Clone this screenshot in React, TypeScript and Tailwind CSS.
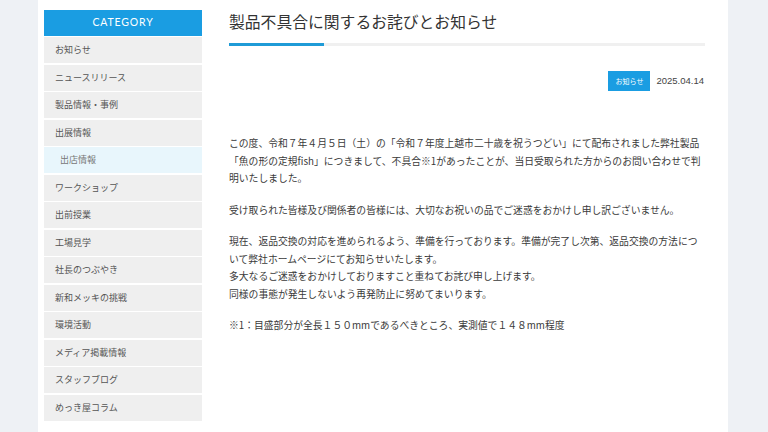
const categories = [
  { label: "お知らせ" },
  { label: "ニュースリリース" },
  { label: "製品情報・事例" },
  { label: "出展情報" },
  { label: "出店情報", sub: true },
  { label: "ワークショップ" },
  { label: "出前授業" },
  { label: "工場見学" },
  { label: "社長のつぶやき" },
  { label: "新和メッキの挑戦" },
  { label: "環境活動" },
  { label: "メディア掲載情報" },
  { label: "スタッフブログ" },
  { label: "めっき屋コラム" },
];

const jp = "font-['Noto_Sans_CJK_JP','Noto_Sans',sans-serif]";

export default function App() {
  return (
    <div className={`w-[768px] h-[432px] overflow-hidden bg-[#eef1f5] ${jp}`}>
      <div className="ml-[38px] w-[690px] h-full bg-white flex pt-[10px]">
        {/* Sidebar */}
        <aside className="ml-[6px] w-[158px] shrink-0">
          <div className="h-[26px] bg-[#1a9de2] flex items-center justify-center text-white text-[10.5px] font-['Lato',sans-serif] tracking-[0.08em]">
            CATEGORY
          </div>
          <ul className="flex flex-col gap-[1.5px] pt-[1px]">
            {categories.map((c) => (
              <li
                key={c.label}
                className={`h-[26px] flex items-center text-[9px] ${
                  c.sub ? "bg-[#e8f6fc] pl-[16px] text-[#777]" : "bg-[#efefef] pl-[11px] text-[#555]"
                }`}
              >
                {c.label}
              </li>
            ))}
          </ul>
        </aside>

        {/* Main */}
        <main className="ml-[27px] w-[476px]">
          <h1 className="text-[15.8px] leading-[24px] text-[#333]">
            製品不具合に関するお詫びとお知らせ
          </h1>
          <div className="mt-[9px] h-[3px] bg-[#f0f0f0] flex">
            <div className="w-[95px] h-[3px] bg-[#1f9bd7]" />
          </div>

          <div className="mt-[25px] flex justify-end items-center gap-[6px] pr-[1px]">
            <span className="bg-[#1a9de2] text-white text-[7px] w-[42px] h-[20px] flex items-center justify-center">
              お知らせ
            </span>
            <span className="text-[9.5px] text-[#444] font-['Liberation_Sans',sans-serif]">2025.04.14</span>
          </div>

          <div className="mt-[44px] text-[9.8px] leading-[17.5px] text-[#3a3a3a] flex flex-col gap-[14px]">
            <p>
              この度、令和７年４月５日（土）の「令和７年度上越市二十歳を祝うつどい」にて配布されました弊社製品「魚の形の定規fish」につきまして、不具合※1があったことが、当日受取られた方からのお問い合わせで判明いたしました。
            </p>
            <p>受け取られた皆様及び関係者の皆様には、大切なお祝いの品でご迷惑をおかけし申し訳ございません。</p>
            <p>
              現在、返品交換の対応を進められるよう、準備を行っております。準備が完了し次第、返品交換の方法について弊社ホームページにてお知らせいたします。
              <br />
              多大なるご迷惑をおかけしておりますこと重ねてお詫び申し上げます。
              <br />
              同様の事態が発生しないよう再発防止に努めてまいります。
            </p>
            <p>※1：目盛部分が全長１５０mmであるべきところ、実測値で１４８mm程度</p>
          </div>
        </main>
      </div>
    </div>
  );
}
